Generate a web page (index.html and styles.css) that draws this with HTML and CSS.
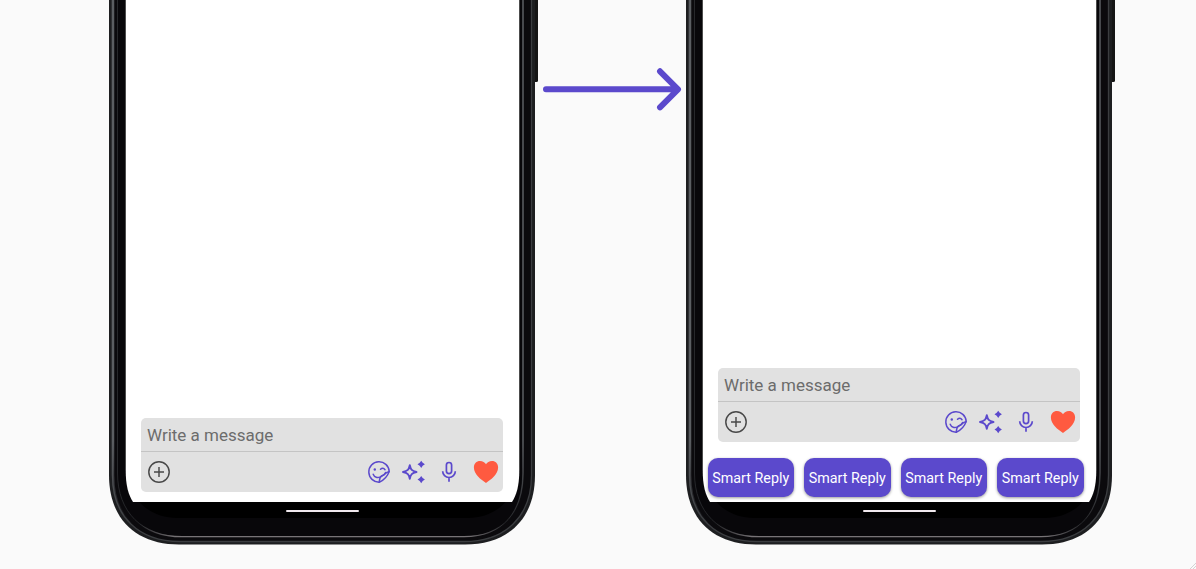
FILE: index.html
```html
<!DOCTYPE html>
<html lang="en">
<head>
<meta charset="utf-8">
<title>Smart replies</title>
<link rel="stylesheet" href="styles.css">
</head>
<body>
<svg class="defs" width="0" height="0" aria-hidden="true">
  <defs>
    <linearGradient id="side" gradientUnits="userSpaceOnUse" x1="0" y1="440" x2="0" y2="525">
      <stop offset="0" stop-color="#5b5e62"/><stop offset="1" stop-color="#5b5e62" stop-opacity="0"/>
    </linearGradient>
    <linearGradient id="base" gradientUnits="userSpaceOnUse" x1="30" y1="0" x2="396" y2="0">
      <stop offset="0" stop-color="#777376" stop-opacity="0"/><stop offset=".1" stop-color="#777376"/><stop offset=".9" stop-color="#777376"/><stop offset="1" stop-color="#777376" stop-opacity="0"/>
    </linearGradient>
    <symbol id="frame" viewBox="0 0 430 569">
      <rect x="424" y="-10" width="5" height="92" rx="1.500" fill="#151515"/>
      <path d="M0-10V475C0 520 28 544.500 70 544.500H356C398 544.500 426 520 426 475V-10Z" fill="#1d1e20"/>
      <path d="M3.500-10V475C3.500 517 30 541.500 71 541.500H355C396 541.500 422.500 517 422.500 475V-10" fill="#0b0a0d" stroke="#3b3d40" stroke-width="1.300"/>
      <path d="M4-10V475C4 517 30 541.500 71 541.500" fill="none" stroke="url(#side)" stroke-width="2.500"/>
      <path d="M8.500-10V473C8.500 512 33 536.700 73 536.700H355C394 536.700 414 512 414 473V-10" fill="#08070a" stroke="#26272a"/>
      <path d="M414-10V473C414 512 394 536.700 355 536.700" fill="none" stroke="url(#side)" stroke-width="1.400"/>
      <path d="M8.500 473C8.500 512 33 536.700 73 536.700H355C394 536.700 414 512 414 473" fill="none" stroke="url(#base)" stroke-width="1.200"/>
      <path d="M16-10V460C16 498 40 518 68 518H359C387 518 411 498 411 460V-10Z" fill="#000"/>
      <path d="M16.700-10V470C16.700 486 19.500 495 24 502H403C407.500 495 410.300 486 410.300 470V-10Z" fill="#fff"/>
      <rect x="177" y="510" width="73" height="2" rx="1" fill="#f1e9ee"/>
    </symbol>
    <symbol id="plus" viewBox="0 0 24 24">
      <g fill="none" stroke="#484848" stroke-width="1.450"><circle cx="12" cy="12" r="10.200"/><path d="M12 7v10M7 12h10"/></g>
    </symbol>
    <symbol id="sticker" viewBox="0 0 24 24">
      <g fill="none" stroke="#5b49cc" stroke-width="1.500" stroke-linecap="round" stroke-linejoin="round">
        <path d="M22.200 11.400A10.200 10.200 0 1 0 12.200 22.200C16 20.500 20.500 16 22.200 11.400Z"/>
        <path d="M12.200 22C12.800 18 13 16.500 15.500 15.500C18 15 18.200 12.300 22 11.800"/>
        <path d="M6.200 14.200C7.500 17.500 10.500 18.300 13.600 16.900C16.500 15.700 18 14 18.600 12.500"/>
        <path d="M13.500 9.300Q16 6.900 18 9.700"/>
      </g>
      <circle cx="7.800" cy="9.500" r="1.200" fill="#5b49cc"/>
    </symbol>
    <symbol id="sparkles" viewBox="0 0 24 24">
      <path d="M8.800 5.300C9.700 9.700 10.900 11 15.500 12C10.900 13 9.700 14.300 8.800 18.700C7.900 14.300 6.700 13 2 12C6.700 11 7.900 9.700 8.800 5.300Z" fill="none" stroke="#5b49cc" stroke-width="1.900" stroke-linejoin="round"/>
      <path d="M20.200 .7L21.700 2.800L23.900 4.300L21.700 5.800L20.200 8L18.700 5.800L16.500 4.300L18.700 2.800ZM20.200 16L21.700 18.100L23.900 19.600L21.700 21.100L20.200 23.300L18.700 21.100L16.500 19.600L18.700 18.100Z" fill="#5b49cc"/>
    </symbol>
    <symbol id="mic" viewBox="0 0 24 24">
      <path d="M9.400 5.100a2.600 2.600 0 0 1 5.200 0v6a2.600 2.600 0 0 1-5.200 0ZM5.700 11.200a6.300 6.300 0 0 0 12.600 0M12 17.500v4.300" fill="none" stroke="#5b49cc" stroke-width="1.700"/>
    </symbol>
    <symbol id="heart" viewBox="0 0 26 24">
      <path d="M13 23C8 19.500 .9 14.400 .9 7.500C.9 3.600 3.500 1 7 1C9.700 1 12 2.300 13 4.200C14 2.300 16.300 1 19 1C22.500 1 25.100 3.600 25.100 7.500C25.100 14.400 18 19.500 13 23Z" fill="#ff5a40"/>
    </symbol>
  </defs>
</svg>

<main class="stage">
  <section class="phone">
    <svg class="frame"><use href="#frame"/></svg>
    <div class="screen">
      <div class="composer">
        <div class="message">Write a message</div>
        <div class="tools">
          <svg class="icon"><use href="#plus"/></svg>
          <svg class="icon sticker"><use href="#sticker"/></svg>
          <svg class="icon sparkles"><use href="#sparkles"/></svg>
          <svg class="icon mic"><use href="#mic"/></svg>
          <svg class="icon heart"><use href="#heart"/></svg>
        </div>
      </div>
    </div>
  </section>

  <svg class="arrow" viewBox="0 0 140 44"><path d="M4 22.300H135M118 4.300L136 22.300L118 40.300" fill="none" stroke="#5b49cc" stroke-width="6" stroke-linecap="round" stroke-linejoin="round"/></svg>

  <section class="phone">
    <svg class="frame"><use href="#frame"/></svg>
    <div class="screen with-replies">
      <div class="composer">
        <div class="message">Write a message</div>
        <div class="tools">
          <svg class="icon"><use href="#plus"/></svg>
          <svg class="icon sticker"><use href="#sticker"/></svg>
          <svg class="icon sparkles"><use href="#sparkles"/></svg>
          <svg class="icon mic"><use href="#mic"/></svg>
          <svg class="icon heart"><use href="#heart"/></svg>
        </div>
      </div>
      <div class="replies">
        <button class="reply">Smart Reply</button>
        <button class="reply">Smart Reply</button>
        <button class="reply">Smart Reply</button>
        <button class="reply">Smart Reply</button>
      </div>
    </div>
  </section>
  <svg class="grip" viewBox="0 0 6 6"><path d="M0 6L6 0M3 6L6 3" stroke="#d4d4d4"/></svg>
</main>
</body>
</html>
```
FILE: styles.css
```css
* {
  box-sizing: border-box;
}

body {
  margin: 0;
  background: #fafafa;
  font-family: Roboto, "Liberation Sans", sans-serif;
  overflow: hidden;
}

.defs {
  position: absolute;
}

.stage {
  display: flex;
  align-items: flex-start;
  position: relative;
  height: 569px;
  padding-left: 109px;
}

.phone {
  position: relative;
  flex: none;
  width: 430px;
  height: 569px;
}

.frame {
  position: absolute;
  inset: 0;
  width: 430px;
  height: 569px;
}

.screen {
  position: relative;
  display: flex;
  flex-direction: column;
  justify-content: flex-end;
  height: 502px;
  padding: 0 36px 10px 32px;
}

.with-replies {
  padding-bottom: 5px;
}

.composer {
  width: 362px;
  height: 74px;
  border-radius: 5px;
  background: #e1e1e1;
}

.message {
  height: 34px;
  padding-left: 6px;
  border-bottom: 1px solid #c4c4c4;
  color: #6c6c6c;
  font-size: 17px;
  line-height: 35px;
}

.tools {
  display: flex;
  align-items: center;
  height: 40px;
  padding: 0 4px 0 5.600px;
}

.icon {
  flex: none;
  width: 24px;
  height: 24px;
}

.sticker {
  margin-left: auto;
}

.sparkles {
  margin-left: 10.500px;
}

.mic {
  margin-left: 12px;
}

.heart {
  width: 26px;
  margin-left: 12px;
}

.replies {
  display: flex;
  gap: 10px;
  width: 377px;
  margin: 16px 0 0 -10.500px;
}

.reply {
  flex: none;
  width: 86.500px;
  height: 39px;
  padding: 1px 0 0;
  border: 0;
  border-radius: 10px;
  background: #5b49cc;
  box-shadow: 0 1px 3px #0006;
  color: #fff;
  font: 14.300px Roboto, "Liberation Sans", sans-serif;
  white-space: nowrap;
}

.arrow {
  flex: none;
  width: 140px;
  height: 44px;
  margin: 67px 4px 0 3px;
}

.grip {
  position: absolute;
  right: 0;
  bottom: 0;
  width: 6px;
  height: 6px;
}
```
